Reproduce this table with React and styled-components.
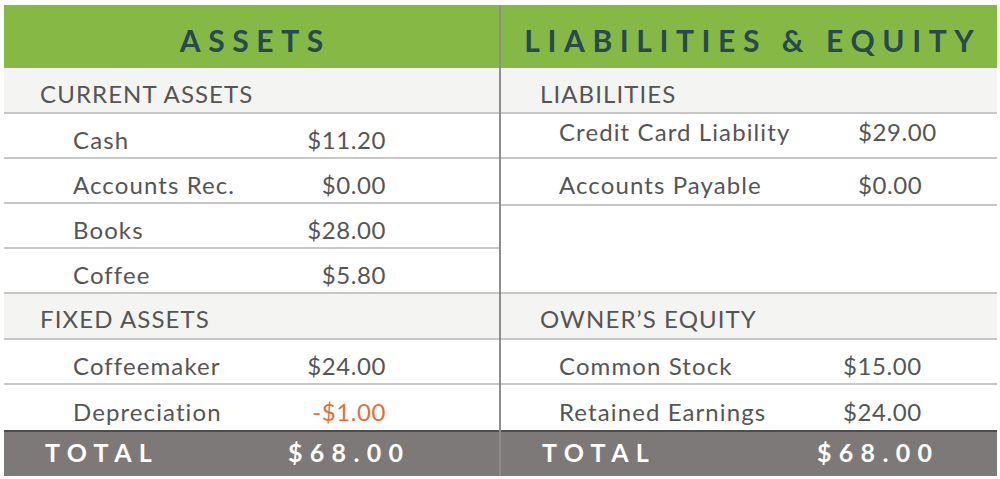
import React from "react";
import styled, { createGlobalStyle } from "styled-components";

const GlobalStyle = createGlobalStyle`
  html, body {
    margin: 0;
    padding: 0;
    background: #ffffff;
  }
  body {
    font-family: "Lato", "Noto Sans", sans-serif;
    color: #555555;
  }
`;

const assets = [
  {
    title: "CURRENT ASSETS",
    shift: 7,
    items: [
      { label: "Cash", value: "$11.20" },
      { label: "Accounts Rec.", value: "$0.00" },
      { label: "Books", value: "$28.00" },
      { label: "Coffee", value: "$5.80" },
    ],
  },
  {
    title: "FIXED ASSETS",
    shift: 5,
    items: [
      { label: "Coffeemaker", value: "$24.00" },
      { label: "Depreciation", value: "-$1.00", negative: true },
    ],
  },
];

const liabilities = [
  {
    title: "LIABILITIES",
    shift: 7,
    labelWidth: 299,
    items: [
      { label: "Credit Card Liability", value: "$29.00", shift: -8 },
      { label: "Accounts Payable", value: "$0.00", shift: 7 },
    ],
    spacer: true,
  },
  {
    title: "OWNER\u2019S EQUITY",
    shift: 5,
    labelWidth: 284,
    items: [
      { label: "Common Stock", value: "$15.00" },
      { label: "Retained Earnings", value: "$24.00" },
    ],
  },
];

export default function App() {
  return (
    <>
      <GlobalStyle />
      <Page>
        <Sheet>
          <Column $divider>
            <Heading>ASSETS</Heading>
            {assets.map((section, s) => (
              <React.Fragment key={section.title}>
                <SectionTitle $indent={36} $shift={section.shift}>
                  {section.title}
                </SectionTitle>
                {section.items.map((item, i) => (
                  <Item
                    key={item.label}
                    $indent={69}
                    $shift={item.shift ?? 9}
                    $last={s === 1 && i === section.items.length - 1}
                  >
                    <Label $width={233}>{item.label}</Label>
                    <Value $width={80} $align="right" $negative={item.negative}>
                      {item.value}
                    </Value>
                  </Item>
                ))}
              </React.Fragment>
            ))}
            <Total>
              <TotalLabel $width={243}>TOTAL</TotalLabel>
              <span>$68.00</span>
            </Total>
          </Column>
          <Column>
            <Heading>LIABILITIES &amp; EQUITY</Heading>
            {liabilities.map((section) => (
              <React.Fragment key={section.title}>
                <SectionTitle $indent={39} $shift={section.shift}>
                  {section.title}
                </SectionTitle>
                {section.items.map((item, i) => (
                  <Item
                    key={item.label}
                    $indent={58}
                    $shift={item.shift ?? 9}
                    $last={i === section.items.length - 1}
                  >
                    <Label $width={section.labelWidth}>{item.label}</Label>
                    <Value $align="left">{item.value}</Value>
                  </Item>
                ))}
                {section.spacer && <Spacer />}
              </React.Fragment>
            ))}
            <Total>
              <TotalLabel $width={275}>TOTAL</TotalLabel>
              <span>$68.00</span>
            </Total>
          </Column>
        </Sheet>
      </Page>
    </>
  );
}

const Page = styled.div`
  width: 1000px;
  height: 479px;
  padding: 5px 3px 0 4px;
  box-sizing: border-box;
  overflow: hidden;
`;

const Sheet = styled.div`
  display: grid;
  grid-template-columns: 497px 496px;
  width: 993px;
`;

const Column = styled.div`
  display: flex;
  flex-direction: column;
  border-right: ${({ $divider }) => ($divider ? "2px solid #8e8e8e" : "none")};
`;

const Heading = styled.div`
  height: 63px;
  box-sizing: border-box;
  padding-top: 6px;
  padding-left: 7.6px;
  background: #86b846;
  color: #27494f;
  font-weight: 700;
  font-size: 30px;
  letter-spacing: 7.6px;
  display: flex;
  align-items: center;
  justify-content: center;
  white-space: nowrap;
`;

const SectionTitle = styled.div`
  height: 46px;
  box-sizing: border-box;
  background: #f4f4f3;
  border-bottom: 2px solid #c6c6c6;
  padding-left: ${({ $indent }) => $indent}px;
  padding-top: ${({ $shift }) => $shift}px;
  display: flex;
  align-items: center;
  font-size: 24px;
  letter-spacing: 1.1px;
  line-height: 1;
  color: #555555;
`;

const Item = styled.div`
  height: 45px;
  box-sizing: border-box;
  border-bottom: ${({ $last }) => ($last ? "none" : "2px solid #c6c6c6")};
  padding-left: ${({ $indent }) => $indent}px;
  padding-top: ${({ $shift }) => ($shift > 0 ? $shift : 0)}px;
  padding-bottom: ${({ $shift }) => ($shift < 0 ? -$shift : 0)}px;
  display: flex;
  align-items: center;
  font-size: 24px;
  letter-spacing: 1.1px;
  line-height: 1;
`;

const Label = styled.span`
  width: ${({ $width }) => $width}px;
  flex: none;
  color: #555555;
`;

const Value = styled.span`
  width: ${({ $width }) => ($width ? `${$width}px` : "auto")};
  flex: none;
  text-align: ${({ $align }) => $align};
  letter-spacing: 0.6px;
  white-space: nowrap;
  color: ${({ $negative }) => ($negative ? "#e0703a" : "#555555")};
`;

const Spacer = styled.div`
  height: 90px;
  border-top: 2px solid #c6c6c6;
  border-bottom: 2px solid #c6c6c6;
  box-sizing: border-box;
`;

const Total = styled.div`
  height: 46px;
  box-sizing: border-box;
  background: #7c7978;
  border-top: 2px solid #4d4d4d;
  display: flex;
  align-items: center;
  color: #ffffff;
  font-weight: 700;
  font-size: 25px;
  letter-spacing: 7.3px;
  padding-left: 41px;
  padding-bottom: 4px;
  white-space: nowrap;
`;

const TotalLabel = styled.span`
  width: ${({ $width }) => $width}px;
  flex: none;
`;
